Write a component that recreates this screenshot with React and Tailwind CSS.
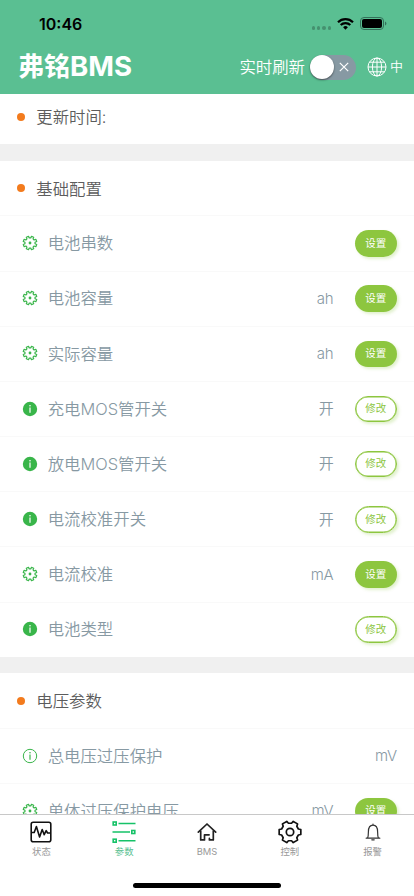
import clsx from 'clsx';

const GROUPS = [
  {
    title: '基础配置',
    rows: [
      { icon: 'gear', label: '电池串数', action: 'set' },
      { icon: 'gear', label: '电池容量', unit: 'ah', action: 'set' },
      { icon: 'gear', label: '实际容量', unit: 'ah', action: 'set' },
      { icon: 'infoFill', label: '充电MOS管开关', unit: '开', action: 'edit' },
      { icon: 'infoFill', label: '放电MOS管开关', unit: '开', action: 'edit' },
      { icon: 'infoFill', label: '电流校准开关', unit: '开', action: 'edit' },
      { icon: 'gear', label: '电流校准', unit: 'mA', action: 'set' },
      { icon: 'infoFill', label: '电池类型', action: 'edit' },
    ],
  },
  {
    title: '电压参数',
    rows: [
      { icon: 'info', label: '总电压过压保护', unit: 'mV' },
      { icon: 'gear', label: '单体过压保护电压', unit: 'mV', action: 'set' },
    ],
  },
];

// polygon outline of a cog: each tooth is [inner, outer, outer, inner]
function cogPoints(teeth, cx, cy, outer, inner, start, top, base) {
  const pts = [];
  const at = (deg, r) => {
    const a = (deg * Math.PI) / 180;
    pts.push(`${(cx + r * Math.cos(a)).toFixed(2)},${(cy + r * Math.sin(a)).toFixed(2)}`);
  };
  for (let i = 0; i < teeth; i++) {
    const mid = start + (i * 360) / teeth;
    at(mid - base, inner);
    at(mid - top, outer);
    at(mid + top, outer);
    at(mid + base, inner);
  }
  return pts.join(' ');
}

const SMALL_COG = cogPoints(8, 8, 8, 6.9, 5.1, 22.5, 10, 14);
const BIG_COG = cogPoints(6, 12, 12, 11.1, 8.9, 0, 13, 20);

function RowIcon({ type }) {
  if (type === 'gear') {
    return (
      <svg viewBox="0 0 16 16" className="mb-px size-4" fill="none" stroke="#39b54a" strokeWidth="1.2" strokeLinejoin="round">
        <polygon points={SMALL_COG} />
        <circle cx="8" cy="8" r="1.4" fill="#39b54a" stroke="none" />
      </svg>
    );
  }
  const filled = type === 'infoFill';
  const mark = filled ? '#fff' : '#39b54a';
  return (
    <svg viewBox="0 0 16 16" className="mb-px size-4">
      <circle cx="8" cy="8" r={filled ? 7.2 : 6.7} fill={filled ? '#39b54a' : 'none'} stroke="#39b54a" strokeWidth={filled ? 0 : 1} />
      <circle cx="8" cy="4.7" r="0.8" fill={mark} />
      <path d="M8 6.5v5.3" stroke={mark} strokeWidth="1.2" />
    </svg>
  );
}

function ActionButton({ type }) {
  return (
    <button
      className={clsx(
        'ml-[21px] h-[26.5px] w-[42.5px] rounded-full pt-px text-[10.5px] leading-none font-normal shadow-[2px_2px_3px_rgba(141,198,63,0.25)]',
        type === 'set' ? 'bg-[#8dc63f] text-white' : 'border-[1.5px] border-[#8dc63f] bg-white text-[#8dc63f] ring-[0.5px] ring-[#8dc63f] ring-inset',
      )}
    >
      {type === 'set' ? '设置' : '修改'}
    </button>
  );
}

function SectionTitle({ children }) {
  return (
    <div className="flex h-[54.7px] items-center bg-white pl-[16.5px] text-[16.4px] text-[#5c5c5c]">
      <span className="mr-[11.8px] size-[8px] rounded-full bg-[#f37b1d]" />
      <span className="pt-[2px]">{children}</span>
    </div>
  );
}

function Row({ icon, label, unit, action }) {
  return (
    <div className="flex h-[55.17px] items-center border-t border-[#f9f9f9] bg-white pr-[17px] pl-[21.7px] text-[16.4px] text-[#8799a3]">
      <RowIcon type={icon} />
      <span className="ml-[10px] flex-1 whitespace-nowrap">{label}</span>
      {unit && <span className="pt-px text-[15px] tracking-[-0.2px]">{unit}</span>}
      {action && <ActionButton type={action} />}
    </div>
  );
}

function TabItem({ label, active, children }) {
  return (
    <div className="flex flex-1 flex-col items-center pt-[5px]">
      <div className="flex h-[24px] items-center justify-center">{children}</div>
      <span className={clsx('mt-[1px] text-[9.4px] leading-[13px] font-normal', active ? 'text-[#5abf92]' : 'text-[#999]')}>{label}</span>
    </div>
  );
}

export default function App() {
  return (
    <div className="flex h-[896px] w-[414px] flex-col overflow-hidden bg-[#f0f0f0] font-['Inter','Noto_Sans_CJK_SC',sans-serif] font-[350]">
      <header className="h-[94px] shrink-0 bg-[#5abf92]">
        <div className="flex h-[44px] items-center pt-[4px] pr-[27px] pl-[39px]">
          <span className="flex-1 text-[16px] font-semibold text-black">10:46</span>
          <div className="mt-[8px] mr-[6px] flex gap-[1.8px]">
            {[0, 1, 2, 3].map((i) => (
              <span key={i} className="size-[3.5px] rounded-full bg-[#45916f]" />
            ))}
          </div>
          <svg viewBox="0 0 17 12" className="mr-[6px] mb-px h-[12px] w-[17px]" fill="none" stroke="#000" strokeWidth="2.2">
            <path d="M1 4.2a10.8 10.8 0 0 1 15 0" />
            <path d="M3.7 7a6.9 6.9 0 0 1 9.6 0" />
            <path d="M8.5 11.7 6.1 9.3a3.4 3.4 0 0 1 4.8 0z" fill="#000" stroke="none" />
          </svg>
          <svg viewBox="0 0 27 13" className="mb-px h-[13px] w-[27px]">
            <rect x="0.5" y="0.5" width="23" height="12" rx="3.5" fill="none" stroke="#34715a" />
            <rect x="2" y="2" width="20" height="9" rx="2" />
            <path d="M25 4.5v4q1.4-.5 1.4-2t-1.4-2" fill="#34715a" />
          </svg>
        </div>
        <div className="flex h-[46px] items-center pr-[11px] pl-[18px] text-white">
          <h1 className="flex-1 text-[27.6px] leading-none font-bold">
            <span className="text-[26px]">弗铭</span>BMS
          </h1>
          <span className="text-[16.4px]">实时刷新</span>
          <div className="ml-[5px] flex h-[25px] w-[46px] items-center justify-between rounded-full bg-[#8799a3] pr-[7px]">
            <span className="size-[24px] rounded-full bg-white shadow-[0_1px_2px_rgba(0,0,0,0.5)]" />
            <svg viewBox="0 0 10 10" className="size-[10px]" stroke="#fff" strokeWidth="1.2">
              <path d="M0.8 0.8l8.4 8.4M9.2 0.8L0.8 9.2" />
            </svg>
          </div>
          <svg viewBox="0 0 20 20" className="ml-[11px] size-[20px]" fill="none" stroke="#fff" strokeWidth="1">
            <circle cx="10" cy="10" r="9" />
            <ellipse cx="10" cy="10" rx="4.6" ry="9" />
            <path d="M10 1v18M1 10h18M2.6 5.2h14.8M2.6 14.8h14.8" />
          </svg>
          <span className="ml-[3px] text-[13px]">中</span>
        </div>
      </header>

      <main className="min-h-0 flex-1 overflow-hidden">
        <div className="flex h-[50.3px] items-center bg-white pb-[4px] pl-[16.5px] text-[16.4px] text-[#5c5c5c]">
          <span className="mr-[11.8px] size-[8px] rounded-full bg-[#f37b1d]" />
          更新时间:
        </div>
        {GROUPS.map((g) => (
          <section key={g.title} className="mt-[16.5px]">
            <SectionTitle>{g.title}</SectionTitle>
            {g.rows.map((r) => (
              <Row key={r.label} {...r} />
            ))}
          </section>
        ))}
      </main>

      <nav className="relative flex h-[82px] shrink-0 border-t border-[#c8c8c8] bg-white">
        <TabItem label="状态">
          <svg viewBox="0 0 22 22" className="size-[22px]" fill="none" stroke="#111" strokeWidth="1.6" strokeLinejoin="round">
            <rect x="1.2" y="1.2" width="19.6" height="19.6" rx="2" />
            <path d="M2 11.5h2.2L6.4 5.5l3.2 10.5 2.6-7.5 2 5.2 2-4 1.4 2.3H20" />
          </svg>
        </TabItem>
        <TabItem label="参数" active>
          <svg viewBox="0 0 24 22" className="h-[22px] w-[24px]" fill="none" stroke="#16c268" strokeWidth="1.6">
            <path d="M6.5 2.5h17M.5 11h17.5M6.5 19.7h17" strokeWidth="1.4" />
            <rect x="1.2" y="1" width="3" height="3" />
            <rect x="19.8" y="9.5" width="3" height="3" />
            <rect x="1.2" y="18.2" width="3" height="3" />
          </svg>
        </TabItem>
        <TabItem label="BMS">
          <svg viewBox="0 0 20 20" className="size-[20px]" fill="none" stroke="#222" strokeWidth="1.7" strokeLinecap="round" strokeLinejoin="round">
            <path d="M1.3 10.2 10 2l8.7 8.2" />
            <path d="M3.7 9v8.9h3.8V12.8h4.6M16.3 9v8.9h-3.9v-1.5" />
          </svg>
        </TabItem>
        <TabItem label="控制">
          <svg viewBox="0 0 24 24" className="size-[24px]" fill="none" stroke="#111" strokeWidth="1.7" strokeLinejoin="round">
            <polygon points={BIG_COG} />
            <circle cx="12" cy="12" r="3.7" />
          </svg>
        </TabItem>
        <TabItem label="报警">
          <svg viewBox="0 0 16 18" className="h-[18px] w-[16px]" fill="none" stroke="#333" strokeWidth="1.2" strokeLinecap="round" strokeLinejoin="round">
            <path d="M1.2 15.2h13.6M2.5 15.2c.9-1.6.9-3 .9-6.4C3.4 4.5 5.300 2.200 8 2.200s4.600 2.300 4.600 6.600c0 3.400 0 4.800.9 6.400M8 2.200V1M6.800 16.800h2.400" />
          </svg>
        </TabItem>
        <div className="absolute bottom-[8px] left-[133px] h-[5px] w-[148px] rounded-full bg-black" />
      </nav>
    </div>
  );
}
